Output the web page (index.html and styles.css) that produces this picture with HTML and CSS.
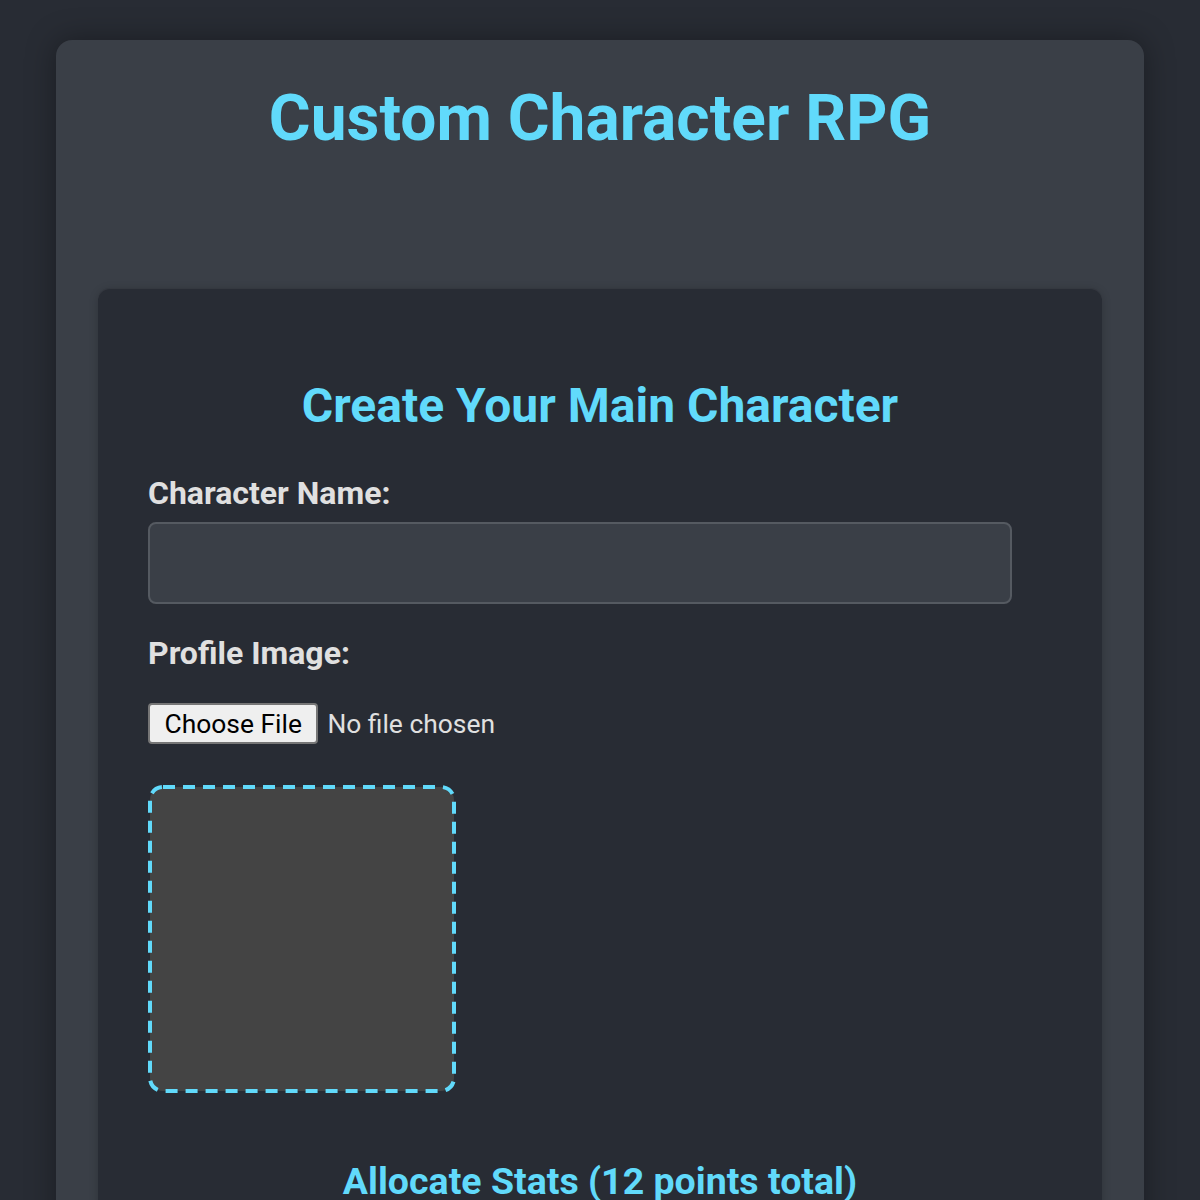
FILE: index.html
```html
<!DOCTYPE html>
<html lang="en">
<head>
<meta charset="utf-8">
<title>Custom Character RPG</title>
<link rel="stylesheet" href="styles.css">
</head>
<body>
<div class="app">
  <h1 class="app-title">Custom Character RPG</h1>
  <div class="card">
    <h2 class="card-title">Create Your Main Character</h2>
    <label class="field-label" for="charName">Character Name:</label>
    <input class="text-input" id="charName" type="text">
    <label class="field-label">Profile Image:</label>
    <div class="file-row">
      <span class="file-btn">Choose File</span>
      <span class="file-status">No file chosen</span>
    </div>
    <svg class="preview" width="308" height="308" viewBox="0 0 308 308" aria-hidden="true">
      <rect x="2" y="2" width="304" height="304" rx="13" ry="13" fill="#444444" stroke="#61dafb" stroke-width="4" stroke-dasharray="12 8"></rect>
    </svg>
    <h3 class="stats-title">Allocate Stats (12 points total)</h3>
  </div>
</div>
</body>
</html>
```

FILE: styles.css
```css
html, body {
  margin: 0;
  padding: 0;
}

body {
  background: #282c34;
  font-family: Roboto, "Liberation Sans", Arial, sans-serif;
  color: #e0e0e0;
  padding: 40px 56px 0;
  overflow: hidden;
}

.app {
  background: #3a3f47;
  border-radius: 16px;
  box-shadow: 0 0 30px rgba(0, 0, 0, 0.35);
  padding: 41px 42px 40px;
}

.app-title {
  margin: 0 0 132px;
  text-align: center;
  color: #61dafb;
  font-size: 64px;
  font-weight: 700;
  line-height: 75px;
}

.card {
  background: #282c34;
  border-radius: 12px;
  box-shadow: inset 0 1px 0 rgba(255, 255, 255, 0.06), 0 2px 10px rgba(0, 0, 0, 0.2);
  padding: 50px 50px 60px;
}

.card-title {
  margin: 40px 0 41px;
  text-align: center;
  color: #61dafb;
  font-size: 48px;
  font-weight: 700;
  line-height: 56px;
}

.field-label {
  display: block;
  font-size: 32px;
  font-weight: 700;
  line-height: 37px;
  color: #e0e0e0;
  margin-bottom: 10px;
}

.text-input {
  display: block;
  box-sizing: border-box;
  width: 864px;
  height: 82px;
  margin: 0 0 31px;
  background: #3a3f47;
  border: 2px solid #555a61;
  border-radius: 8px;
  font-family: inherit;
  font-size: 26px;
  color: #e0e0e0;
  padding: 0 20px;
}

.file-row {
  display: flex;
  align-items: center;
  gap: 9px;
  margin-top: 31px;
}

.file-btn {
  box-sizing: border-box;
  height: 41px;
  padding: 0 14.5px;
  display: flex;
  align-items: center;
  background: #efefef;
  border: 2px solid #767676;
  border-radius: 4px;
  color: #000;
  font-size: 26.4px;
}

.file-status {
  font-size: 26.4px;
  color: #e0e0e0;
}

.preview {
  display: block;
  margin-top: 41px;
}

.stats-title {
  margin: 66px 0 0;
  text-align: center;
  color: #61dafb;
  font-size: 37.5px;
  font-weight: 700;
  line-height: 44px;
}
```
